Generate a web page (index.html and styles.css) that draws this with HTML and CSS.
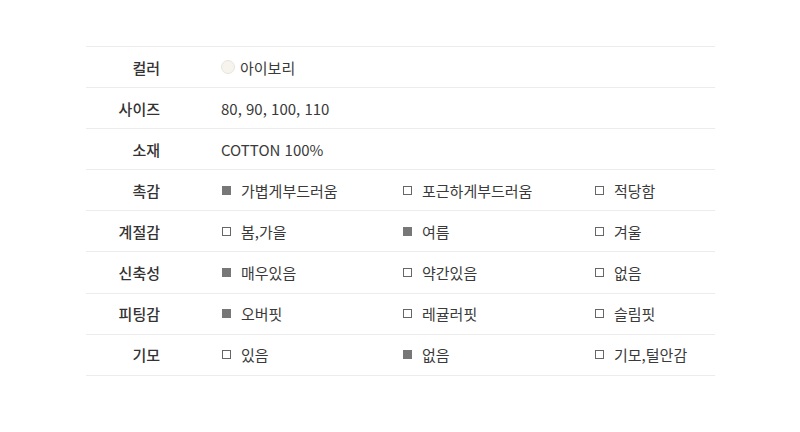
FILE: index.html
```html
<!DOCTYPE html>
<html lang="ko">
<head>
<meta charset="utf-8">
<link rel="stylesheet" href="styles.css">
</head>
<body>
<div class="spec">
  <div class="row">
    <div class="label">컬러</div>
    <div class="value"><span class="swatch"></span>아이보리</div>
  </div>
  <div class="row">
    <div class="label">사이즈</div>
    <div class="value">80, 90, 100, 110</div>
  </div>
  <div class="row">
    <div class="label">소재</div>
    <div class="value">COTTON 100%</div>
  </div>
  <div class="row">
    <div class="label">촉감</div>
    <div class="opts">
      <span class="opt on">가볍게부드러움</span>
      <span class="opt">포근하게부드러움</span>
      <span class="opt">적당함</span>
    </div>
  </div>
  <div class="row">
    <div class="label">계절감</div>
    <div class="opts">
      <span class="opt">봄,가을</span>
      <span class="opt on">여름</span>
      <span class="opt">겨울</span>
    </div>
  </div>
  <div class="row">
    <div class="label">신축성</div>
    <div class="opts">
      <span class="opt on">매우있음</span>
      <span class="opt">약간있음</span>
      <span class="opt">없음</span>
    </div>
  </div>
  <div class="row">
    <div class="label">피팅감</div>
    <div class="opts">
      <span class="opt on">오버핏</span>
      <span class="opt">레귤러핏</span>
      <span class="opt">슬림핏</span>
    </div>
  </div>
  <div class="row">
    <div class="label">기모</div>
    <div class="opts">
      <span class="opt">있음</span>
      <span class="opt on">없음</span>
      <span class="opt">기모,털안감</span>
    </div>
  </div>
</div>
</body>
</html>
```
FILE: styles.css
```css
html, body {
  margin: 0;
  padding: 0;
  background: #fff;
}
body {
  font-family: "Noto Sans CJK KR", "Noto Sans", sans-serif;
  font-size: 15px;
  color: #3a3a3a;
}
.spec {
  width: 629px;
  margin: 46px 0 0 86px;
  border-top: 1px solid #ececec;
}
.row {
  display: flex;
  align-items: center;
  height: 40.1px;
  border-bottom: 1px solid #ececec;
}
.label {
  width: 74px;
  text-align: right;
  font-weight: 500;
  color: #333;
  padding-right: 61px;
}
.value {
  display: flex;
  align-items: center;
}
.swatch {
  width: 14px;
  height: 14px;
  border-radius: 50%;
  background: #f6f4ec;
  border: 1px solid #e6e6e0;
  margin-right: 5px;
  box-sizing: border-box;
}
.opts {
  display: grid;
  grid-template-columns: 181px 192px auto;
}
.opt {
  display: flex;
  align-items: center;
}
.opt::before {
  content: "";
  width: 9px;
  height: 9px;
  box-sizing: border-box;
  border: 1px solid #666;
  margin-right: 10px;
  margin-left: 1px;
}
.opt.on::before {
  background: #777;
  border-color: #777;
}
```
